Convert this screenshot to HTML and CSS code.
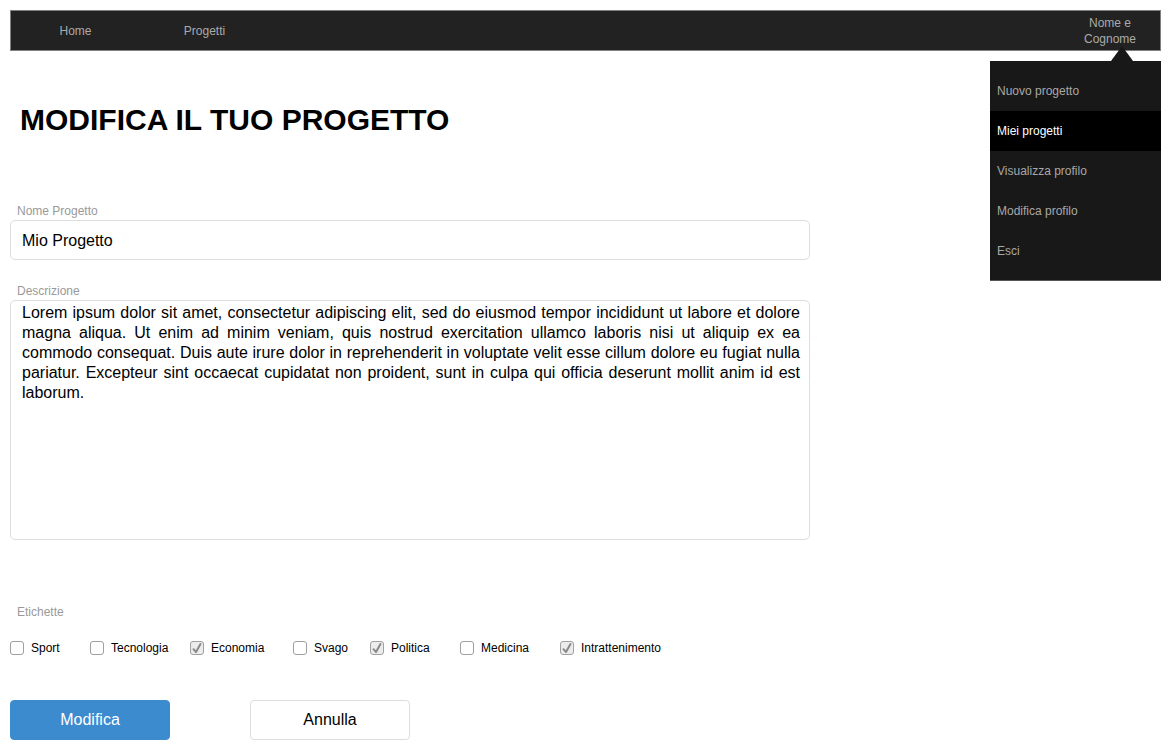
FILE: index.html
```html
<!DOCTYPE html>
<html lang="it">
<head>
<meta charset="utf-8">
<title>Modifica il tuo progetto</title>
<link rel="stylesheet" href="styles.css">
</head>
<body>
<div class="page">
  <nav class="navbar">
    <a class="nav-item">Home</a>
    <a class="nav-item">Progetti</a>
    <div class="nav-spacer"></div>
    <a class="nav-user">Nome e<br>Cognome</a>
  </nav>

  <div class="dropdown">
    <div class="dropdown-arrow"></div>
    <div class="dd-item">Nuovo progetto</div>
    <div class="dd-item active">Miei progetti</div>
    <div class="dd-item">Visualizza profilo</div>
    <div class="dd-item">Modifica profilo</div>
    <div class="dd-item">Esci</div>
  </div>

  <h1 class="title">MODIFICA IL TUO PROGETTO</h1>

  <form class="form">
    <div class="field-label first">Nome Progetto</div>
    <div class="input">Mio Progetto</div>

    <div class="field-label desc">Descrizione</div>
    <div class="textarea">Lorem ipsum dolor sit amet, consectetur adipiscing elit, sed do eiusmod tempor incididunt ut labore et dolore magna aliqua. Ut enim ad minim veniam, quis nostrud exercitation ullamco laboris nisi ut aliquip ex ea commodo consequat. Duis aute irure dolor in reprehenderit in voluptate velit esse cillum dolore eu fugiat nulla pariatur. Excepteur sint occaecat cupidatat non proident, sunt in culpa qui officia deserunt mollit anim id est laborum.</div>

    <div class="field-label tags">Etichette</div>
    <div class="checks">
      <label class="check"><span class="box"></span>Sport</label>
      <label class="check"><span class="box"></span>Tecnologia</label>
      <label class="check"><span class="box checked"><svg viewBox="0 0 14 14" width="14" height="14"><path d="M3.5 8.2 L6 11 L10.5 3" fill="none" stroke="#8a8a8a" stroke-width="2" stroke-linecap="round" stroke-linejoin="round"/></svg></span>Economia</label>
      <label class="check"><span class="box"></span>Svago</label>
      <label class="check"><span class="box checked"><svg viewBox="0 0 14 14" width="14" height="14"><path d="M3.5 8.2 L6 11 L10.5 3" fill="none" stroke="#8a8a8a" stroke-width="2" stroke-linecap="round" stroke-linejoin="round"/></svg></span>Politica</label>
      <label class="check"><span class="box"></span>Medicina</label>
      <label class="check"><span class="box checked"><svg viewBox="0 0 14 14" width="14" height="14"><path d="M3.5 8.2 L6 11 L10.5 3" fill="none" stroke="#8a8a8a" stroke-width="2" stroke-linecap="round" stroke-linejoin="round"/></svg></span>Intrattenimento</label>
    </div>

    <div class="buttons">
      <div class="btn primary">Modifica</div>
      <div class="btn secondary">Annulla</div>
    </div>
  </form>
</div>
</body>
</html>
```

FILE: styles.css
```css
* { box-sizing: border-box; }

html, body {
  margin: 0;
  padding: 0;
  background: #fff;
}

body {
  font-family: "Liberation Sans", Arial, sans-serif;
  color: #000;
}

.page {
  position: relative;
  width: 1171px;
  height: 751px;
  padding: 10px;
  overflow: hidden;
}

.navbar {
  display: flex;
  align-items: center;
  height: 41px;
  background: #222;
  border: 1px solid #808080;
}

.nav-item {
  width: 129px;
  text-align: center;
  font-size: 12px;
  color: #aaa;
}

.nav-spacer { flex: 1; }

.nav-user {
  width: 100px;
  text-align: center;
  font-size: 12px;
  line-height: 16px;
  color: #aaa;
}

.dropdown {
  position: absolute;
  top: 61px;
  right: 10px;
  width: 171px;
  height: 220px;
  background: #181818;
  border-bottom: 1px solid #555;
  padding-top: 10px;
}

.dropdown-arrow {
  position: absolute;
  top: -15px;
  left: 121px;
  width: 0;
  height: 0;
  border-left: 11px solid transparent;
  border-right: 11px solid transparent;
  border-bottom: 15px solid #181818;
}

.dd-item {
  height: 40px;
  line-height: 40px;
  padding-left: 7px;
  font-size: 12px;
  color: #a8a8a8;
}

.dd-item.active {
  background: #000;
  color: #fff;
}

.title {
  margin: 51px 0 0 10px;
  font-size: 30px;
  line-height: 36px;
  font-weight: bold;
}

.form {
  width: 800px;
}

.field-label {
  font-size: 12px;
  line-height: 16px;
  color: #999;
  padding: 1px 0 0 7px;
  margin-bottom: 1px;
}

.field-label.first { margin-top: 64px; }
.field-label.desc { margin-top: 22px; }
.field-label.tags { margin-top: 63px; margin-bottom: 20px; }

.input {
  height: 40px;
  border: 1px solid #ddd;
  border-radius: 5px;
  padding: 1px 0 0 11px;
  font-size: 16px;
  line-height: 37px;
}

.textarea {
  height: 240px;
  border: 1px solid #ddd;
  border-radius: 5px;
  padding: 2px 9px 0 11px;
  font-size: 16px;
  line-height: 20px;
  text-align: justify;
}

.checks {
  display: grid;
  grid-template-columns: 80px 100px 103px 77px 90px 100px auto;
  height: 16px;
  align-items: center;
}

.check {
  display: flex;
  align-items: center;
  font-size: 12px;
  color: #000;
}

.box {
  display: inline-block;
  width: 14px;
  height: 14px;
  border: 1px solid #a0a0a0;
  border-radius: 3px;
  margin-right: 7px;
  background: #fff;
  position: relative;
}

.box.checked {
  background: #ececec;
}

.box svg {
  position: absolute;
  top: -1px;
  left: -1px;
}

.buttons {
  display: flex;
  gap: 80px;
  margin-top: 44px;
}

.btn {
  width: 160px;
  height: 40px;
  border-radius: 4px;
  text-align: center;
  font-size: 16px;
  line-height: 38px;
}

.btn.primary {
  background: #3d8bcf;
  border: 1px solid #3d8bcf;
  color: #fff;
}

.btn.secondary {
  background: #fff;
  border: 1px solid #ddd;
  color: #000;
}
```
